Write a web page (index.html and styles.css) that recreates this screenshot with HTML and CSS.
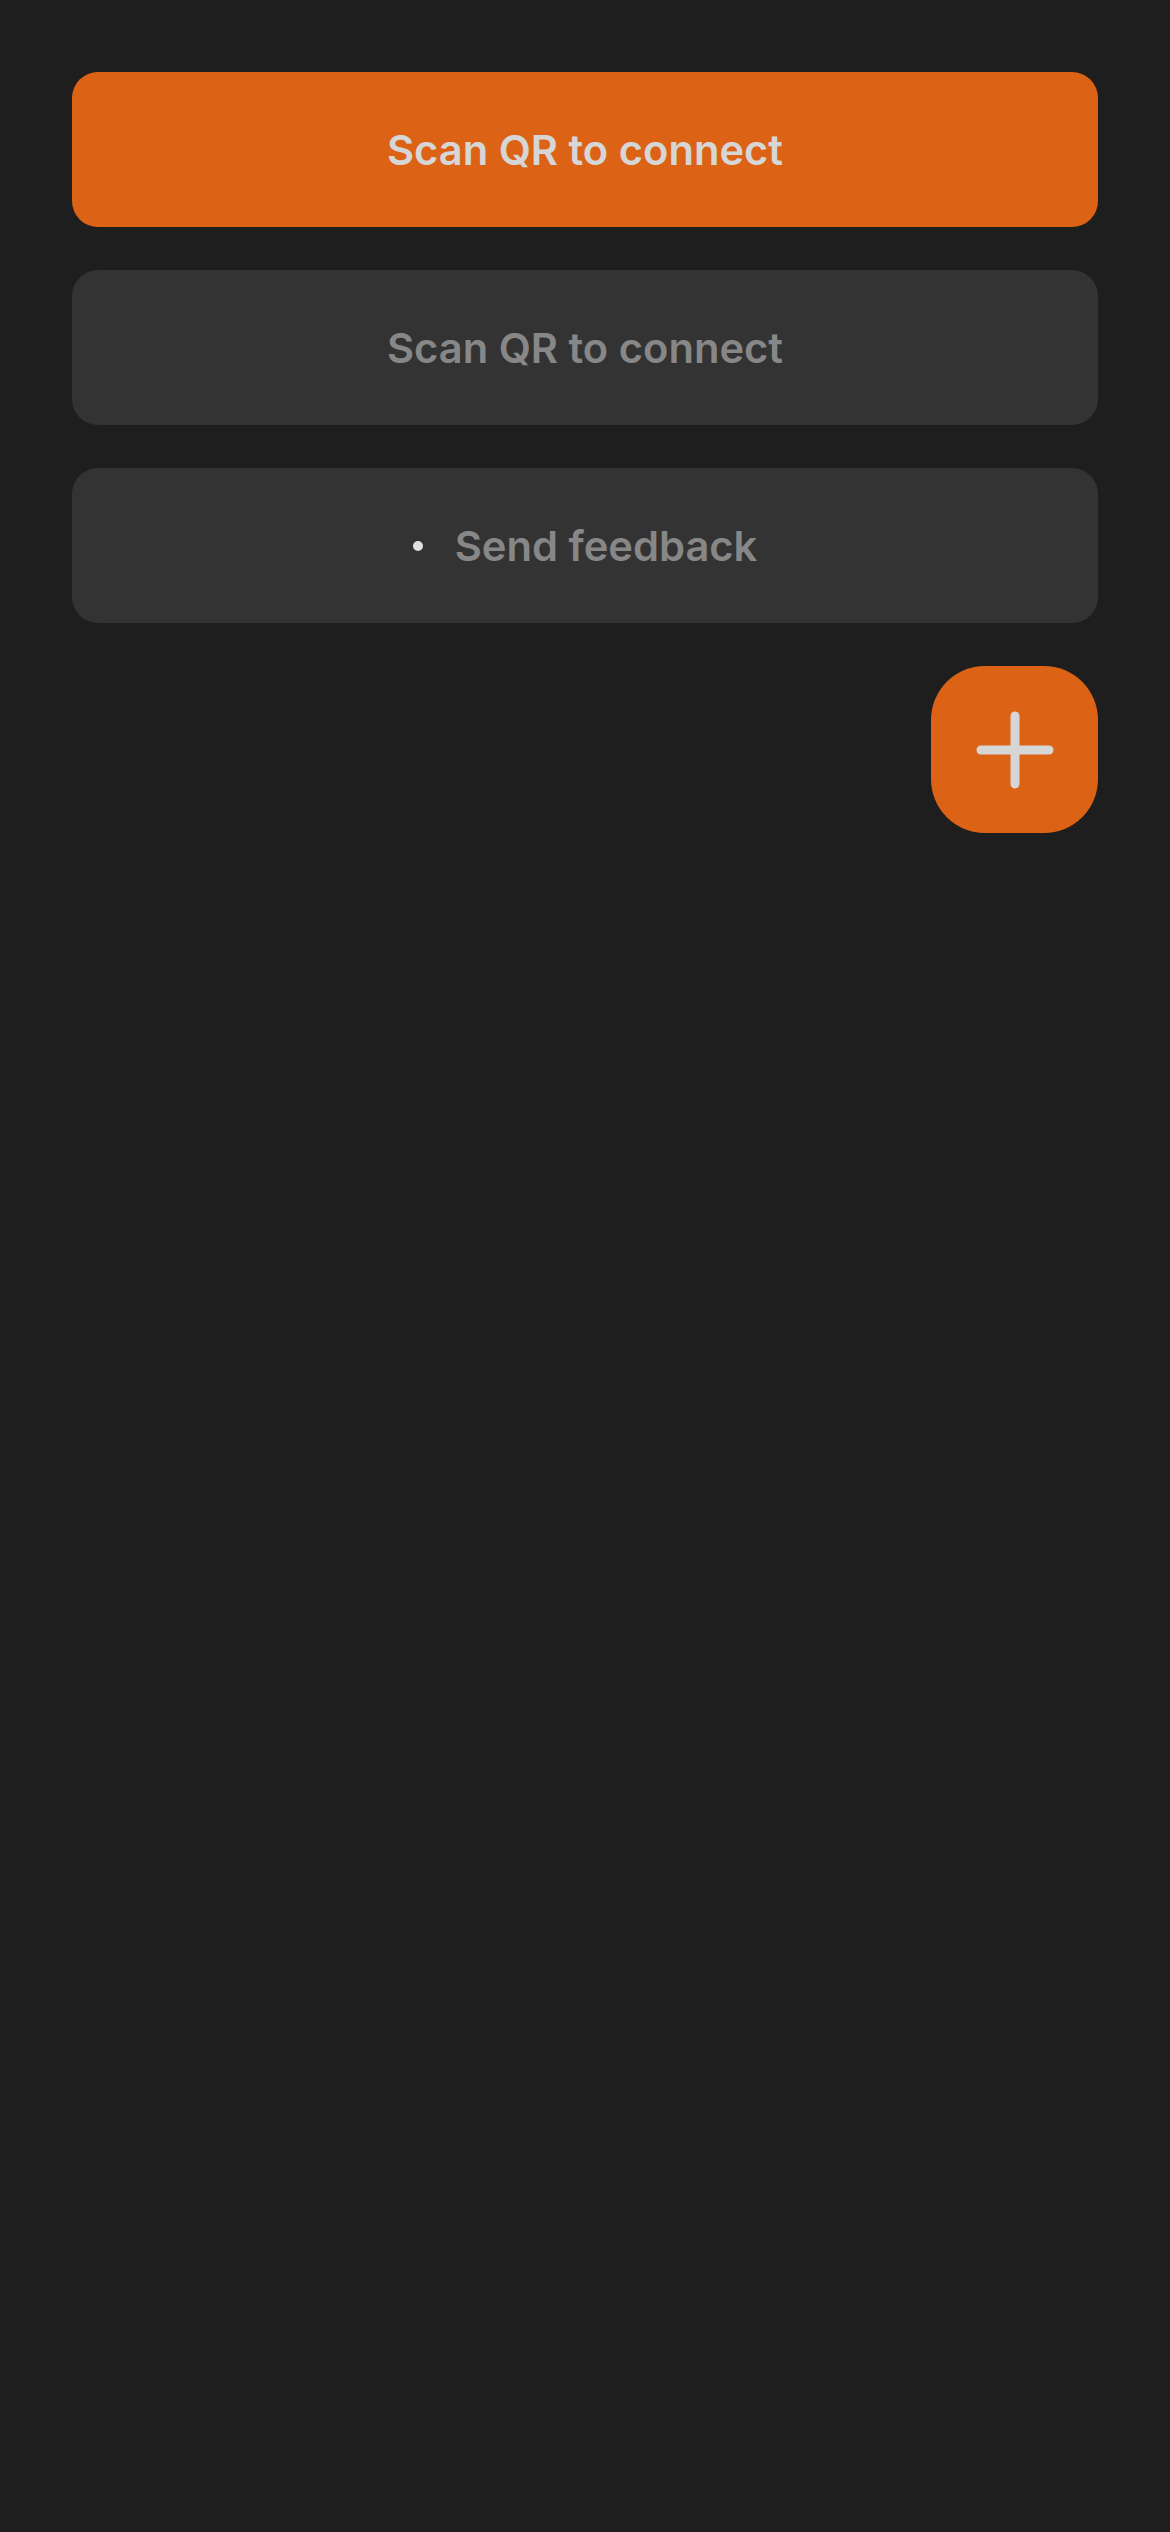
FILE: index.html
```html
<!DOCTYPE html>
<html lang="en">
<head>
<meta charset="utf-8">
<title>Connect</title>
<link rel="stylesheet" href="styles.css">
</head>
<body>
<main class="screen">
  <button class="btn btn-primary">Scan QR to connect</button>
  <button class="btn btn-secondary">Scan QR to connect</button>
  <button class="btn btn-secondary"><span class="dot"></span><span>Send feedback</span></button>
  <div class="fab-row">
    <button class="fab" aria-label="Add">
      <svg width="78" height="78" viewBox="0 0 78 78" fill="none" stroke="#d6d6d6" stroke-width="9" stroke-linecap="round">
        <line x1="39" y1="5" x2="39" y2="73"/>
        <line x1="5" y1="39" x2="73" y2="39"/>
      </svg>
    </button>
  </div>
</main>
</body>
</html>
```

FILE: styles.css
```css
html, body {
  margin: 0;
  padding: 0;
  background: #1e1e1e;
}
body {
  min-height: 2532px;
  font-family: Inter, "Noto Sans", "Liberation Sans", sans-serif;
}
.screen {
  padding: 72px 72px 0;
  display: flex;
  flex-direction: column;
  gap: 43px;
}
.btn {
  height: 155px;
  border: none;
  border-radius: 26px;
  display: flex;
  align-items: center;
  justify-content: center;
  gap: 32px;
  font-family: inherit;
  font-size: 41.7px;
  font-weight: 600;
  letter-spacing: 0;
  padding: 0;
}
.btn-primary {
  background: #dc6316;
  color: #d6d6d6;
}
.btn-secondary {
  background: #333333;
  color: #878787;
}
.dot {
  width: 10px;
  height: 10px;
  border-radius: 50%;
  background: #e0e0e0;
}
.fab-row {
  display: flex;
  justify-content: flex-end;
}
.fab {
  width: 167px;
  height: 167px;
  border: none;
  border-radius: 54px;
  background: #dc6316;
  display: flex;
  align-items: center;
  justify-content: center;
  padding: 0;
}
```
